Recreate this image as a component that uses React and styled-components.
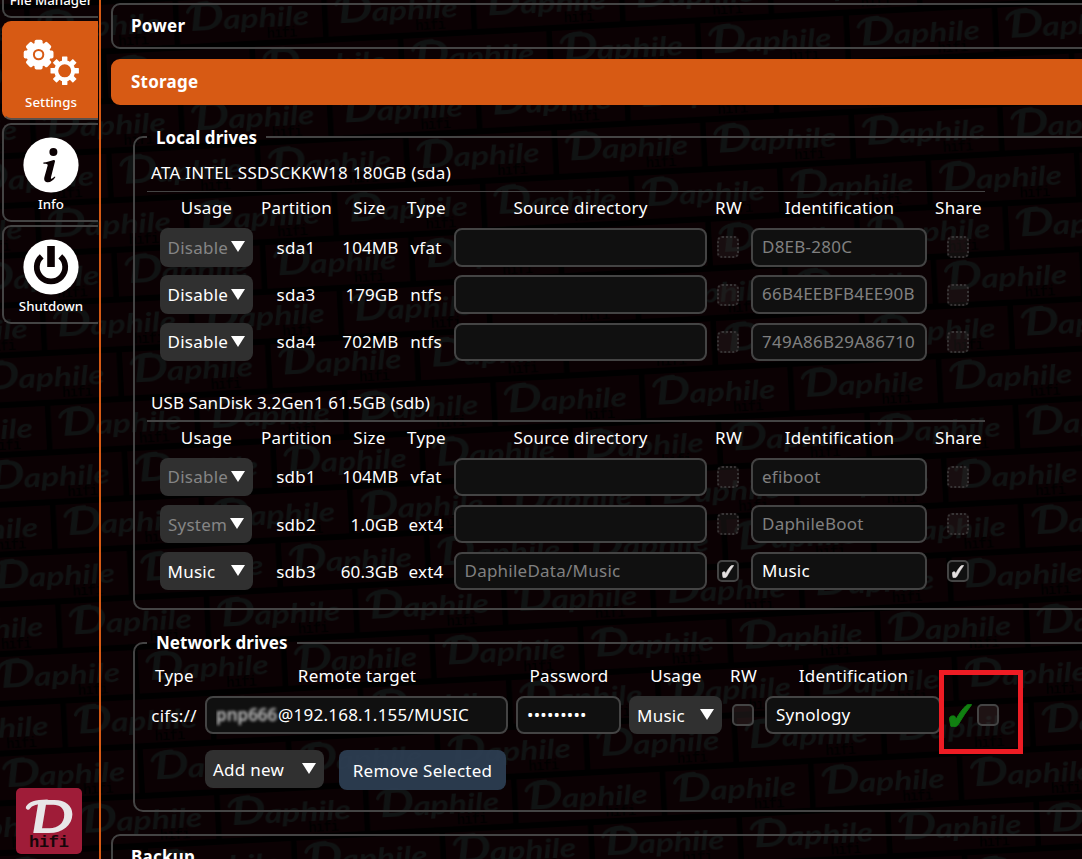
import styled, { createGlobalStyle, css } from "styled-components";

const ORANGE = "#d75a14";
const LINE = "#444444";

const GlobalStyle = createGlobalStyle`
  * {
    box-sizing: border-box;
  }
  body {
    margin: 0;
    background: #000;
    color: #fff;
    font-family: "Noto Sans", sans-serif;
    font-size: 17px;
    letter-spacing: 0.24px;
    overflow: hidden;
  }
`;

const Page = styled.div`
  position: relative;
  display: flex;
  width: 100vw;
  height: 100vh;
  overflow: hidden;
`;

const Wall = styled.svg`
  position: absolute;
  inset: 0;
  width: 100%;
  height: 100%;
  letter-spacing: 0;
`;

const Sidebar = styled.nav`
  position: relative;
  display: flex;
  flex-direction: column;
  justify-content: space-between;
  flex: none;
  width: 101px;
  padding-bottom: 5px;
  border-right: 2px solid ${ORANGE};
`;

const NavList = styled.div`
  display: flex;
  flex-direction: column;
  gap: 3.2px;
  margin-top: -80.6px;
  padding: 0 1px 0 2px;
  letter-spacing: 0;
`;

const NavItem = styled.div`
  display: flex;
  flex-direction: column;
  align-items: center;
  flex: none;
  height: 98.7px;
  padding-top: 12px;
  border: 2px solid ${LINE};
  border-right: 0;
  border-radius: 9px 0 0 9px;
  font-size: 13.3px;
  font-weight: 500;
  line-height: 20px;

  svg {
    width: 56px;
    height: 56px;
    margin-bottom: 1px;
  }

  ${({ $active }) =>
    $active &&
    css`
      background: ${ORANGE};
      border-color: ${ORANGE};
      border-bottom-color: #5b504a;
    `}
`;

const NavLabel = styled.span`
  white-space: nowrap;
`;

const Logo = styled.svg`
  width: 66px;
  height: 66px;
  margin-left: 16px;
  letter-spacing: 0;
`;

const Main = styled.main`
  position: relative;
  display: flex;
  flex-direction: column;
  flex: 1;
  min-width: 0;
  padding: 3px 0 0 10px;
  overflow: hidden;
`;

const SectionBar = styled.div`
  flex: none;
  width: 1000px;
  height: 46px;
  margin-bottom: 10px;
  padding-left: 18px;
  border: 2px solid ${({ $open }) => ($open ? ORANGE : LINE)};
  border-radius: 9px;
  background: ${({ $open }) => ($open ? ORANGE : "transparent")};
  font-weight: 700;
  line-height: 42px;
`;

const StorageBody = styled.div`
  display: flex;
  flex-direction: column;
  gap: 19px;
  flex: none;
  width: 1000px;
  height: 719px;
  padding: 8px 0 0 22px;
`;

const Group = styled.fieldset`
  flex: none;
  min-width: 0;
  height: ${({ $height }) => $height}px;
  margin: 0;
  padding: 0 0 0 12px;
  border: 2px solid ${LINE};
  border-radius: 10px;
`;

const Legend = styled.legend`
  height: 28px;
  padding: 0 9px;
  line-height: ${({ $line }) => $line || 28}px;
  font-weight: 700;
  letter-spacing: 0.05px;
`;

const Drive = styled.section`
  width: 838px;
  height: 229.5px;
`;

const DriveName = styled.div`
  height: 41px;
  padding: 7px 0 0 4px;
  line-height: 30px;
  border-bottom: ${({ $rule }) => $rule}px solid ${LINE};
  letter-spacing: ${({ $rule }) => ($rule === 2 ? 0.08 : 0.27)}px;
  white-space: nowrap;
`;

const driveColumns = "108px 72px 74px 40px 268px 28px 194px 44px";

const HeadRow = styled.div`
  display: grid;
  grid-template-columns: ${driveColumns};
  height: ${({ $height }) => $height}px;
  padding-left: 5px;
`;

const DriveRow = styled.div`
  display: grid;
  grid-template-columns: ${driveColumns};
  height: 47.15px;
  padding-left: 5px;
`;

const Cell = styled.div`
  display: flex;
  justify-content: ${({ $end }) => ($end ? "flex-end" : "center")};
  align-items: center;
  height: 38.4px;
  padding-right: ${({ $end }) => ($end ? 7.5 : 0)}px;
  letter-spacing: ${({ $end }) => ($end ? 0.1 : 0.24)}px;
  white-space: nowrap;
`;

const HeadCell = styled(Cell)`
  height: 31px;
  padding-left: 1px;
`;

const Select = styled.div`
  display: flex;
  align-items: center;
  justify-content: space-between;
  flex: none;
  width: ${({ $width }) => $width || 93}px;
  height: 38.4px;
  padding: 0 8px;
  border-radius: 8px;
  background: #303030;
  color: ${({ $disabled }) => ($disabled ? "#858585" : "#fff")};
  white-space: nowrap;

  svg {
    flex: none;
    width: 14px;
    height: 11px;
    margin-top: -1px;
  }
`;

const Input = styled.div`
  flex: none;
  width: ${({ $width }) => $width}px;
  height: 38.4px;
  padding: 0 9px;
  border: 2px solid ${LINE};
  border-radius: 8px;
  background: #101010;
  color: ${({ $disabled }) => ($disabled ? "#808080" : "#fff")};
  line-height: 34.4px;
`;

const Value = styled.div`
  overflow: hidden;
  white-space: nowrap;
`;

const Smudge = styled.span`
  display: inline-block;
  width: 62px;
  color: #c4c4c4;
  font-weight: 600;
  letter-spacing: 0;
  filter: blur(1.4px);
`;

const Box = styled.span`
  display: flex;
  align-items: center;
  justify-content: center;
  flex: none;
  width: 22px;
  height: 22px;
  border: 2px solid ${LINE};
  border-radius: 5px;
  background: ${({ $checked }) => ($checked ? "#101010" : "rgba(64, 52, 54, 0.36)")};

  ${({ $disabled }) =>
    $disabled &&
    css`
      border: 2px dotted #383536;
      background: rgba(60, 50, 52, 0.28);
    `}

  svg {
    width: 12px;
    height: 13px;
  }
`;

const netColumns = "54px 311px 113px 101px 34px 186px 74px";

const NetHead = styled.div`
  display: grid;
  grid-template-columns: ${netColumns};
  height: 39px;
  padding-top: 3px;
`;

const NetRow = styled.div`
  display: grid;
  grid-template-columns: ${netColumns};
  height: 54px;
`;

const Status = styled.div`
  display: flex;
  align-items: center;
  gap: 5px;
  height: 38.4px;
  padding-left: 3px;

  > svg {
    width: 23px;
    height: 23px;
  }
`;

const Highlight = styled.div`
  position: absolute;
  left: 838px;
  top: 670px;
  width: 84px;
  height: 84px;
  border: 5px solid #ee1c24;
`;

const Actions = styled.div`
  display: flex;
  gap: 15px;
  padding-left: 58px;
`;

const Button = styled.div`
  width: 167px;
  height: 40px;
  border-radius: 8px;
  background: rgba(45, 62, 82, 0.94);
  line-height: 41px;
  text-align: center;
  white-space: nowrap;
`;

const Arrow = () => (
  <svg viewBox="0 0 14 11">
    <path d="M0 0h14L7 11z" fill="#fff" />
  </svg>
);

const Check = ({ color = "#e4e0e0" }) => (
  <svg viewBox="0 0 24 24" preserveAspectRatio="none">
    <path
      d="M.4 15C1 13 2.4 12.4 4 12.4C6 12.4 6.4 12.8 6.8 14.2L7.4 16C10 10.6 13.6 6 17.4 2C19 .6 19.6 .4 21.2 .4H23.4V1C18.6 7.2 14 14 10 20.8C8.4 23.2 7.2 23.6 5 23.6H3.6C2 23.6 2 23.4 1.6 21.8z"
      fill={color}
      stroke={color}
      strokeWidth="1"
      strokeLinejoin="round"
    />
  </svg>
);

const Checkbox = ({ checked, disabled }) => (
  <Box $checked={checked} $disabled={disabled}>
    {checked && <Check />}
  </Box>
);

const turns = [0, 45, 90, 135, 180, 225, 270, 315];

const GearsIcon = () => (
  <svg viewBox="0 0 56 56">
    <g transform="translate(15.6 19.6)" fill="#fff">
      {turns.map((a) => (
        <rect key={a} x="-4" y="-14.9" width="8" height="8" rx="1.8" transform={`rotate(${a})`} />
      ))}
      <circle r="12.2" />
      <circle r="4.7" fill="none" stroke={ORANGE} strokeWidth="2" />
    </g>
    <g transform="translate(41.7 35.8)" fill="#fff">
      {turns.map((a) => (
        <rect key={a} x="-2.7" y="-14.2" width="5.4" height="6" rx="0.4" transform={`rotate(${a})`} />
      ))}
      <circle r="8.5" fill="none" stroke="#fff" strokeWidth="4" />
    </g>
  </svg>
);

const InfoIcon = () => (
  <svg viewBox="0 0 56 56">
    <circle cx="28" cy="28" r="27.6" fill="#fff" />
    <circle cx="30.4" cy="15" r="4" fill="#0b0103" />
    <path
      d="M20.4 25.6C23.8 25 27.5 23.8 30.6 22.9C31.8 22.8 32.3 23.5 31.9 24.8L28 40.2C27.6 42 28.6 42.2 29.8 41.1L31.8 39.4L32.4 40C30.4 43.6 27 45.6 24.2 45.2C21.2 44.7 20.8 42.4 21.5 39.8L24.6 28.8C25 27.2 24.3 26.8 20.4 26.8z"
      fill="#0b0103"
    />
  </svg>
);

const PowerIcon = () => (
  <svg viewBox="0 0 56 56">
    <circle cx="28" cy="28" r="27.6" fill="#fff" />
    <path d="M18.7 17.4A14.2 14.2 0 1 0 37.3 17.4" fill="none" stroke="#0b0103" strokeWidth="5.8" />
    <path d="M24.2 7h7.6v21h-7.6z" fill="#0b0103" />
  </svg>
);

const BrickWord = ({ x, y }) => (
  <g transform={`translate(${x} ${y})`}>
    <rect width="143" height="43.6" fill="#0b0103" />
    <path d="M9 12C11 6 20 3 29 3.4" fill="none" stroke="#101313" strokeWidth="3.2" strokeLinecap="round" />
    <g fill="#101313" fontFamily="Lato, sans-serif" fontStyle="italic">
      <text x="11" y="30.5" fontSize="37" fontWeight="700" textLength="34" lengthAdjust="spacingAndGlyphs">D</text>
      <text x="44" y="30.5" fontSize="27" fontWeight="700" textLength="86" lengthAdjust="spacingAndGlyphs">aphile</text>
    </g>
    <text x="87" y="42" fontFamily="Liberation Mono, monospace" fontWeight="700" fontSize="14" textLength="31" fill="#000">hifi</text>
  </g>
);

const BrickWall = () => (
  <Wall aria-hidden="true">
    <defs>
      <pattern
        id="bricks"
        width="148.7"
        height="99.4"
        patternUnits="userSpaceOnUse"
        patternTransform="translate(705.5 122.5) rotate(-3)"
      >
        <BrickWord x={0} y={0} />
        <BrickWord x={74.4} y={49.7} />
        <BrickWord x={-74.3} y={49.7} />
      </pattern>
    </defs>
    <rect width="100%" height="100%" fill="url(#bricks)" />
  </Wall>
);

const drives = [
  {
    name: "ATA INTEL SSDSCKKW18 180GB (sda)",
    rows: [
      { usage: "Disable", locked: true, part: "sda1", size: "104MB", type: "vfat", id: "D8EB-280C" },
      { usage: "Disable", part: "sda3", size: "179GB", type: "ntfs", id: "66B4EEBFB4EE90B" },
      { usage: "Disable", part: "sda4", size: "702MB", type: "ntfs", id: "749A86B29A86710" },
    ],
  },
  {
    name: "USB SanDisk 3.2Gen1 61.5GB (sdb)",
    rows: [
      { usage: "Disable", locked: true, part: "sdb1", size: "104MB", type: "vfat", id: "efiboot" },
      { usage: "System", locked: true, part: "sdb2", size: "1.0GB", type: "ext4", id: "DaphileBoot" },
      { usage: "Music", part: "sdb3", size: "60.3GB", type: "ext4", source: "DaphileData/Music", id: "Music", shared: true },
    ],
  },
];

const driveHeads = ["Usage", "Partition", "Size", "Type", "Source directory", "RW", "Identification", "Share"];
const netHeads = ["Type", "Remote target", "Password", "Usage", "RW", "Identification"];

const DriveTable = ({ drive, rule }) => (
  <Drive>
    <DriveName $rule={rule}>{drive.name}</DriveName>
    <HeadRow $height={36.3}>
      {driveHeads.map((head) => (
        <HeadCell key={head}>{head}</HeadCell>
      ))}
    </HeadRow>
    {drive.rows.map((row) => (
      <DriveRow key={row.part}>
        <Cell>
          <Select $disabled={row.locked} $width={row.usage === "System" ? 92 : 93}>
            {row.usage}
            <Arrow />
          </Select>
        </Cell>
        <Cell>{row.part}</Cell>
        <Cell $end>{row.size}</Cell>
        <Cell>{row.type}</Cell>
        <Cell>
          <Input $width={253} $disabled>
            <Value>{row.source}</Value>
          </Input>
        </Cell>
        <Cell>
          <Checkbox checked={row.shared} disabled={!row.shared} />
        </Cell>
        <Cell>
          <Input $width={176} $disabled={!row.shared}>
            <Value>{row.id}</Value>
          </Input>
        </Cell>
        <Cell>
          <Checkbox checked={row.shared} disabled={!row.shared} />
        </Cell>
      </DriveRow>
    ))}
  </Drive>
);

export default function App() {
  return (
    <Page>
      <GlobalStyle />
      <BrickWall />
      <Sidebar>
        <NavList>
          <NavItem>
            <svg />
            <NavLabel>File Manager</NavLabel>
          </NavItem>
          <NavItem $active>
            <GearsIcon />
            <NavLabel>Settings</NavLabel>
          </NavItem>
          <NavItem>
            <InfoIcon />
            <NavLabel>Info</NavLabel>
          </NavItem>
          <NavItem>
            <PowerIcon />
            <NavLabel>Shutdown</NavLabel>
          </NavItem>
        </NavList>
        <Logo viewBox="0 0 66 66">
          <rect width="66" height="66" rx="5" fill="#9f1c38" />
          <path d="M12 19.5C14 15.5 22 13.6 31 13.6" fill="none" stroke="#e8e6e8" strokeWidth="4.4" strokeLinecap="round" />
          <text x="15" y="45.2" fontFamily="Lato, sans-serif" fontStyle="italic" fontWeight="700" fontSize="46" textLength="43" lengthAdjust="spacingAndGlyphs" fill="#e8e6e8">D</text>
          <text x="13" y="59" fontFamily="Liberation Mono, monospace" fontWeight="700" fontSize="17" textLength="40" fill="#16060a">hifi</text>
        </Logo>
      </Sidebar>
      <Main>
        <SectionBar>Power</SectionBar>
        <SectionBar $open>Storage</SectionBar>
        <StorageBody>
          <Group $height={487}>
            <Legend $line={30}>Local drives</Legend>
            <DriveTable drive={drives[0]} rule={1} />
            <DriveTable drive={drives[1]} rule={2} />
          </Group>
          <Group $height={183}>
            <Legend>Network drives</Legend>
            <NetHead>
              {netHeads.map((head) => (
                <HeadCell key={head}>{head}</HeadCell>
              ))}
            </NetHead>
            <NetRow>
              <Cell>cifs://</Cell>
              <Cell>
                <Input $width={303}>
                  <Value>
                    <Smudge>pnp666</Smudge>@192.168.1.155/MUSIC
                  </Value>
                </Input>
              </Cell>
              <Cell>
                <Input $width={105}>
                  <Value>•••••••••</Value>
                </Input>
              </Cell>
              <Cell>
                <Select>
                  Music
                  <Arrow />
                </Select>
              </Cell>
              <Cell>
                <Checkbox />
              </Cell>
              <Cell>
                <Input $width={176}>
                  <Value>Synology</Value>
                </Input>
              </Cell>
              <Status>
                <Check color="#118011" />
                <Checkbox />
              </Status>
            </NetRow>
            <Actions>
              <Select $width={119}>
                Add new
                <Arrow />
              </Select>
              <Button>Remove Selected</Button>
            </Actions>
          </Group>
        </StorageBody>
        <SectionBar>Backup</SectionBar>
        <Highlight />
      </Main>
    </Page>
  );
}
